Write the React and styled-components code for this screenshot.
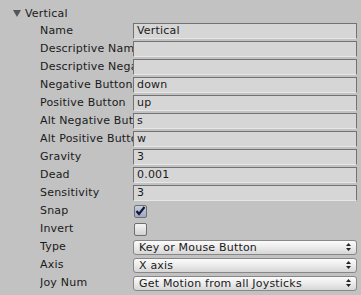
import styled, { createGlobalStyle } from "styled-components";

const GlobalStyle = createGlobalStyle`
  html, body {
    margin: 0;
    padding: 0;
    background: #c2c2c2;
  }
  body {
    font-family: "DejaVu Sans", "Liberation Sans", sans-serif;
    font-size: 11px;
    letter-spacing: 0.2px;
    color: #1a1a1a;
  }
`;

const Panel = styled.div`
  width: 361px;
  height: 295px;
  padding: 4px 4px 0 0;
  box-sizing: border-box;
  overflow: hidden;
`;

const Header = styled.div`
  display: flex;
  align-items: center;
  height: 18px;
  padding-left: 13px;
  gap: 4px;
`;

const Foldout = styled.span`
  width: 0;
  height: 0;
  border-left: 4px solid transparent;
  border-right: 4px solid transparent;
  border-top: 7px solid #555;
  margin-top: 1px;
`;

const Row = styled.div`
  display: grid;
  grid-template-columns: 93px 1fr;
  align-items: center;
  height: 18px;
  padding-left: 40px;
`;

const Label = styled.div`
  white-space: nowrap;
  overflow: hidden;
  line-height: 18px;
`;

const Field = styled.div`
  height: 16px;
  box-sizing: border-box;
  background: #d6d6d6;
  border: 1px solid #727272;
  border-bottom-color: #e6e6e6;
  padding-left: 3px;
  line-height: 14px;
  white-space: nowrap;
  overflow: hidden;
`;

const Check = styled.div`
  width: 13px;
  height: 13px;
  box-sizing: border-box;
  border: 1px solid #6f6f6f;
  border-radius: 2px;
  margin-left: 1px;
  background: ${(p) =>
    p.$on
      ? "linear-gradient(#c7cfdf, #9ea9c2)"
      : "linear-gradient(#f4f4f4, #d2d2d2)"};
  display: flex;
  align-items: center;
  justify-content: center;
`;

const Popup = styled.div`
  height: 15px;
  box-sizing: border-box;
  border: 1px solid #878787;
  border-radius: 3px;
  background: linear-gradient(#fbfbfb, #e9e9e9 55%, #d6d6d6);
  display: flex;
  align-items: center;
  justify-content: space-between;
  padding: 0 5px 0 5px;
  white-space: nowrap;
`;

const Arrows = () => (
  <svg width="5" height="8" viewBox="0 0 5 8">
    <path d="M2.5 0 L5 3 L0 3 Z M2.5 8 L5 5 L0 5 Z" fill="#222" />
  </svg>
);

const fields = [
  ["Name", "Vertical"],
  ["Descriptive Name", ""],
  ["Descriptive Negative Name", ""],
  ["Negative Button", "down"],
  ["Positive Button", "up"],
  ["Alt Negative Button", "s"],
  ["Alt Positive Button", "w"],
  ["Gravity", "3"],
  ["Dead", "0.001"],
  ["Sensitivity", "3"],
];

const popups = [
  ["Type", "Key or Mouse Button"],
  ["Axis", "X axis"],
  ["Joy Num", "Get Motion from all Joysticks"],
];

export default function App() {
  return (
    <Panel>
      <GlobalStyle />
      <Header>
        <Foldout />
        <span>Vertical</span>
      </Header>
      {fields.map(([label, value]) => (
        <Row key={label}>
          <Label>{label}</Label>
          <Field>{value}</Field>
        </Row>
      ))}
      <Row>
        <Label>Snap</Label>
        <Check $on>
          <svg width="11" height="10" viewBox="0 0 11 10">
            <path
              d="M1.5 5 L4 8 L9.5 1"
              stroke="#141a3a"
              strokeWidth="2.2"
              fill="none"
            />
          </svg>
        </Check>
      </Row>
      <Row>
        <Label>Invert</Label>
        <Check />
      </Row>
      {popups.map(([label, value]) => (
        <Row key={label}>
          <Label>{label}</Label>
          <Popup>
            <span>{value}</span>
            <Arrows />
          </Popup>
        </Row>
      ))}
    </Panel>
  );
}
